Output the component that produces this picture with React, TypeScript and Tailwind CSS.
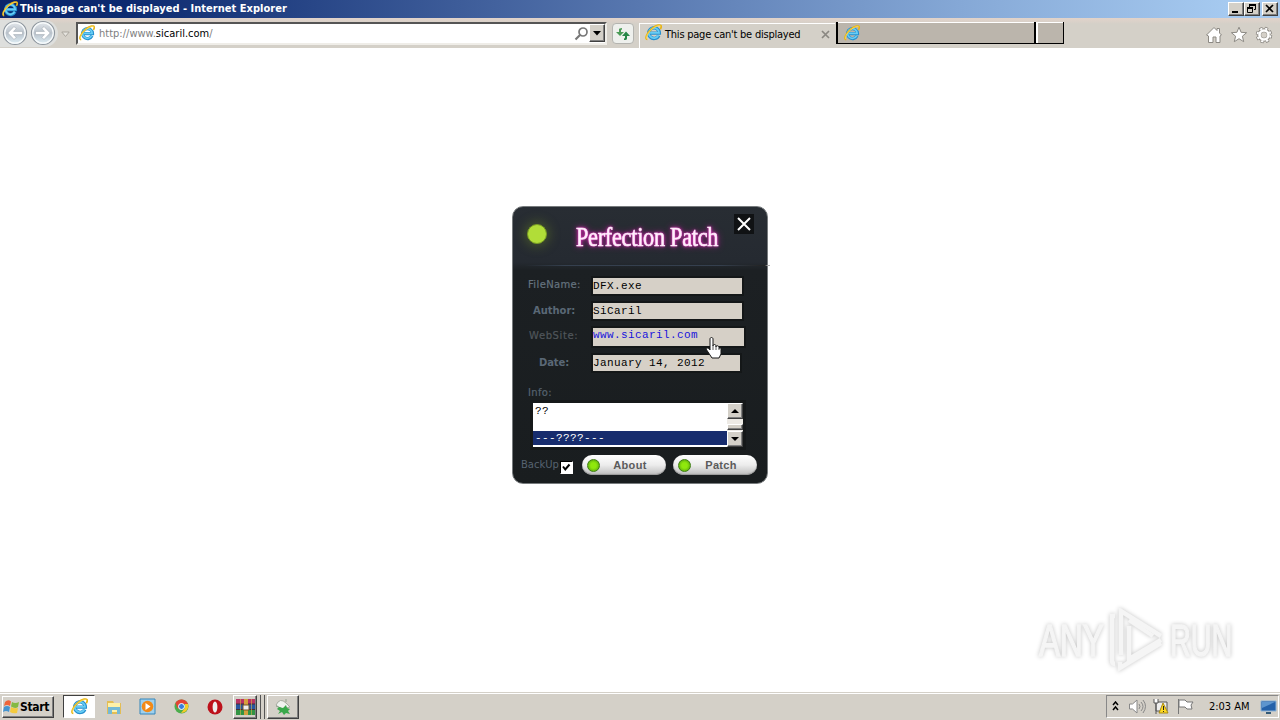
import React from "react";

const tahoma = "font-['DejaVu_Sans_Condensed','DejaVu_Sans',sans-serif]";
const mono = "font-['Liberation_Mono',monospace]";

function IE({ size = 16 }: { size?: number }) {
  return (
    <svg width={size} height={size} viewBox="0 0 16 16" className="shrink-0">
      <path d="M13 10.800A5 5 0 1 1 13.500 8.600H4.500" fill="none" stroke="#258fce" strokeWidth="3.200" />
      <path d="M12.700 10.600A4.800 4.800 0 1 1 13.200 8.400H4.800" fill="none" stroke="#67cdf5" strokeWidth="1.700" />
      <path d="M2.200 14.600C-.6 14.400 1.500 8.700 6.200 4.600 10.600.8 15.200-.1 15.300 2.300c0 .9-.4 1.800-.9 2.600" fill="none" stroke="#e7b416" strokeWidth="1.600" />
      <path d="M2 14C.2 13 3 8 6.600 5 10 2 13.500.8 14.600 1.800" fill="none" stroke="#ffe46b" strokeWidth=".7" />
    </svg>
  );
}

function NavArrow({ flip = false }: { flip?: boolean }) {
  return (
    <svg width="26" height="26" viewBox="0 0 26 26" className={flip ? "-scale-x-100" : ""}>
      <defs>
        <linearGradient id="nav" x1="0" y1="0" x2="0" y2="1">
          <stop offset="0" stopColor="#e6eaee" />
          <stop offset=".5" stopColor="#b9c2cb" />
          <stop offset="1" stopColor="#e1f1f8" />
        </linearGradient>
      </defs>
      <circle cx="13" cy="13" r="11.500" fill="url(#nav)" stroke="#8e969e" strokeWidth="1.200" />
      <circle cx="13" cy="13" r="10.200" fill="none" stroke="#f7fafb" strokeWidth="1.300" />
      <path d="M12 6.500 5.800 13l6.200 6.500 2.200-2.200-2.700-2.700h9v-3.200h-9l2.700-2.700z" fill="#fff" stroke="#a3abb3" strokeWidth=".6" />
    </svg>
  );
}

const raised = "border border-t-white border-l-white border-r-[#404040] border-b-[#404040] bg-[#d4d0c8] shadow-[inset_-1px_-1px_0_#808080]";

function TitleBar() {
  return (
    <div className="flex h-[18px] items-center bg-[linear-gradient(90deg,#0a246a_0%,#0d2a70_10%,#5878b0_50%,#85a8d6_75%,#a6caf0_96%)] pl-[2px] pr-[2px]">
      <IE size={16} />
      <span className={`${tahoma} ml-[2px] w-[280px] whitespace-nowrap pt-px text-[11px] font-bold tracking-[0.020px] text-white`}>This page can't be displayed - Internet Explorer</span>
      <div className="ml-auto flex">
        <button className={`${raised} flex h-[14px] w-4 items-center justify-center`}>
          <svg width="12" height="10"><path d="M2 8h6" stroke="#000" strokeWidth="2" /></svg>
        </button>
        <button className={`${raised} flex h-[14px] w-4 items-center justify-center`}>
          <svg width="12" height="10" fill="none" stroke="#000"><path d="M4 1h5M3.500 1v2M9.500 0v5.500H8M1.500 4v4.500h5V4z" /><path d="M3 1h7M1 4h6" strokeWidth="2" /></svg>
        </button>
        <button className={`${raised} ml-[2px] flex h-[14px] w-4 items-center justify-center`}>
          <svg width="12" height="10"><path d="m2 1 7 7M9 1 2 8" stroke="#000" strokeWidth="1.700" /></svg>
        </button>
      </div>
    </div>
  );
}

function BrowserBar() {
  return (
    <div className="flex h-[30px] bg-[linear-gradient(180deg,#e2d3ca_0,#d4d0c8_6px)]">
      <div className="mt-[2px] flex h-[27px] w-[58px] rounded-r-full bg-[#dedfdd] pl-[2px]">
        <NavArrow />
        <div className="ml-[2px]"><NavArrow flip /></div>
      </div>
      <svg width="10" height="8" className="ml-[3px] mt-[13px]"><path d="M.8 1h7.400L4.500 5.500z" fill="#e6e4df" stroke="#aaa69e" /></svg>
      <div className="ml-[5px] mt-[4px] flex h-[23px] w-[531px] border-2 border-b-[#efede8] border-l-[#555] border-r-[#efede8] border-t-[#555] bg-white">
        <div className="ml-px mt-[1px]"><IE size={16} /></div>
        <span className={`${tahoma} ml-[4px] mt-[2px] whitespace-nowrap text-[11px] leading-4 tracking-[0.010px] text-[#808080]`}>http://www.<span className="text-black">sicaril.com</span>/</span>
        <svg width="16" height="16" className="ml-auto mr-0 mt-[2px]" fill="none" stroke="#777"><circle cx="10" cy="6" r="4" strokeWidth="1.700" /><path d="m7 9-4.500 4.500" strokeWidth="2.200" /></svg>
        <button className={`${raised} flex h-[18px] w-4 items-center justify-center`}><svg width="8" height="5"><path d="M0 0h8L4 4.500z" /></svg></button>
      </div>
      <div className="ml-[5px] mt-[5px] flex h-[21px] w-[22px] items-center justify-center rounded-sm border border-[#b4b4b0] bg-[#eef0ed]">
        <svg width="16" height="16"><path d="M4 6V3.500Q4 2 7 2v1.500Q6 3.500 6 4.500V6h3L5 10 1 6z" fill="#4a9b57" /><path d="M12 10v2.500q0 1.500-3 1.500v-1.500q1 0 1-1V10H7l4-4.500 4 4.500z" fill="#278748" /></svg>
      </div>
      <div className="ml-[5px] mt-[5px] flex h-[25px] w-[196px] border-l border-t border-white pl-[5px] pt-px">
        <div className="-mt-px"><IE size={17} /></div>
        <span className={`${tahoma} ml-[3px] mt-[4px] whitespace-nowrap text-[11px] leading-3 tracking-[-0.230px]`}>This page can't be displayed</span>
        <svg width="9" height="9" className="ml-auto mr-[5px] mt-[5px]"><path d="m1 1 7 7M8 1 1 8" stroke="#8a8781" strokeWidth="1.700" /></svg>
      </div>
      <div className="ml-px mt-[4px] flex h-[22px] w-[200px] border-b border-l-2 border-r-2 border-black bg-[#bbb5ac] pl-[6px] pt-[3px] shadow-[inset_0_1px_0_#fff]"><IE size={16} /></div>
      <div className="mt-[4px] h-[22px] w-[28px] border-b border-r border-black bg-[#bbb5ac] shadow-[inset_2px_1px_0_#fff]" />
      <div className="ml-auto mr-[7px] mt-[8px] flex gap-[7px]">
        <svg width="18" height="18" fill="#fff" stroke="#8c8983"><path d="M1.500 9 9 1.500l3 3v-2h2.500V7l2 2-1.500 1v6.500h-4V11H8v5.500H3.500V10z" /></svg>
        <svg width="18" height="18" fill="#fff" stroke="#8c8983"><path d="m9 1.200 2.100 5.100 5.500.4-4.200 3.500 1.300 5.500L9 12.700l-4.700 3 1.300-5.500L1.400 6.700l5.500-.4z" /></svg>
        <svg width="18" height="18" fill="none"><circle cx="9" cy="9" r="6.500" stroke="#8c8983" strokeWidth="3.500" strokeDasharray="3 2.105" /><circle cx="9" cy="9" r="4.800" stroke="#8c8983" strokeWidth="4" /><circle cx="9" cy="9" r="6.500" stroke="#fff" strokeWidth="1.800" strokeDasharray="2.200 2.905" strokeDashoffset="-.4" /><circle cx="9" cy="9" r="4.500" stroke="#fff" strokeWidth="2.600" /></svg>
      </div>
    </div>
  );
}

const label = "font-['DejaVu_Sans',sans-serif] text-[10px] leading-[14px]";
const field = "border-2 border-[#141718] bg-[#d6d0c7]";
const fieldText = `${mono} whitespace-nowrap text-[11px] tracking-[0.400px]`;

function PillButton({ text }: { text: string }) {
  return (
    <button className="flex h-5 w-[84px] items-center rounded-full bg-[linear-gradient(180deg,#fff_0%,#ececec_50%,#bdbdbd_100%)] pl-[5px] shadow-[inset_0_-1px_1px_#999]">
      <span className="h-[13px] w-[13px] rounded-full border border-[#3d7f11] bg-[radial-gradient(circle,#8fe80c_35%,#5fae0e_80%)]" />
      <span className="flex-1 pb-px pl-[4px] pr-[10px] text-center font-['Liberation_Sans',sans-serif] text-[11px] font-bold leading-4 tracking-[0.300px] text-[#5b5b5b]">{text}</span>
    </button>
  );
}

function PatchWindow() {
  return (
    <section className="relative h-[278px] w-[256px] rounded-[11px] border border-[#777b7d] bg-[linear-gradient(180deg,#282d33_0%,#252a31_20%,#1c2023_23%,#191d1f_100%)] pl-px">
      <header className="flex h-[59px]">
        <span className="ml-[13px] mt-[17px] h-5 w-5 shrink-0 rounded-full border border-[#789b23] bg-[#b1dd38] shadow-[0_0_12px_2px_rgba(135,165,35,0.35)]" />
        <h1 className="ml-[29px] mt-[13px] h-[34px] w-[157px] shrink-0 origin-left scale-x-[0.890] scale-y-[1.080] whitespace-nowrap font-['Liberation_Serif',serif] text-[25px] leading-[34px] tracking-[-0.300px] text-[#fff0fc] [-webkit-text-stroke:0.600px_#ffe5fa] [text-shadow:0_0_2px_#ff45d1,0_0_4px_#e52fbb,0_0_8px_#cd1ba7]">Perfection Patch</h1>
        <button className="ml-px mt-[7px] flex h-5 w-5 shrink-0 items-center justify-center bg-[#101214]"><svg width="16" height="16"><path d="m2 2 12 12M14 2 2 14" stroke="#fff" strokeWidth="2" /></svg></button>
      </header>
      <div className="-mr-[3px] -mt-px h-px bg-[linear-gradient(90deg,transparent_4%,#35404f_20%,#35404f_80%,#222_98%,#aaa_99%)]" />
      <div className="grid grid-cols-[77px_1fr]">
        <span className={`${label} ml-[14px] mt-[12px] tracking-[0.350px] text-[#65737f] [-webkit-text-stroke:0.200px_#65737f]`}>FileName:</span>
        <div className={`${field} mt-[10px] h-5 w-[153px]`}><p className={`${fieldText} leading-[17px]`}>DFX.exe</p></div>
        <span className={`${label} ml-[19px] mt-[8px] -mb-px font-bold tracking-[-0.050px] text-[#5a6876]`}>Author:</span>
        <div className={`${field} mt-[5px] h-5 w-[153px]`}><p className={`${fieldText} leading-[16px]`}>SiCaril</p></div>
        <span className={`${label} ml-[15px] mt-[8px] -mb-px tracking-[0.600px] text-[#50565b] [-webkit-text-stroke:0.200px_#50565b]`}>WebSite:</span>
        <div className={`${field} mt-[5px] h-[22px] w-[155px]`}><p className={`${fieldText} leading-[15px] text-[#1712dc]`}>www.sicaril.com</p></div>
        <span className={`${label} ml-[25px] mt-[8px] -mb-px font-bold tracking-[-0.100px] text-[#5a6876]`}>Date:</span>
        <div className={`${field} mt-[5px] h-5 w-[151px]`}><p className={`${fieldText} leading-[16px]`}>January 14, 2012</p></div>
      </div>
      <div className={`${label} ml-[14px] mt-[13px] h-[14px] tracking-[0.350px] text-[#566370] [-webkit-text-stroke:0.200px_#566370]`}>Info:</div>
      <div className="ml-[19px] mt-[3px] flex h-[44px] w-[210px] bg-white shadow-[0_0_0_3px_#151819]">
        <div className={`${mono} w-[194px] text-[11px] tracking-[0.400px]`}>
          <p className="h-[28px] pl-[2px] leading-[16px]">??</p>
          <p className="h-[14px] bg-[#172c6d] pl-[2px] leading-[15px] text-white">---????---</p>
        </div>
        <div className="flex flex-1 flex-col bg-[#edeae5]">
          <button className={`${raised} flex h-4 items-center justify-center`}><svg width="8" height="4"><path d="m4 0 4 4H0z" /></svg></button>
          <div className={`${raised} mt-[5px] h-[6px]`} />
          <button className={`${raised} mt-auto flex h-4 items-center justify-center`}><svg width="8" height="4"><path d="M0 0h8L4 4z" /></svg></button>
        </div>
      </div>
      <footer className="mt-[8px] flex h-5 items-center pl-[7px]">
        <span className={`${label} w-[39px] text-[#566370]`}>BackUp</span>
        <span className="mt-[4px] h-[13px] w-[13px] border border-b-white border-l-black border-r-white border-t-black bg-white"><svg width="11" height="11"><path d="m2 4.500 2.300 3 4.200-5" fill="none" stroke="#000" strokeWidth="2" /></svg></span>
        <div className="ml-[9px]"><PillButton text="About" /></div>
        <div className="ml-[7px]"><PillButton text="Patch" /></div>
      </footer>
      <svg width="20" height="24" viewBox="0 0 20 24" className="absolute left-[191px] top-[129px]"><path d="M6 14V3c0-2 3-2 3 0v7c0-2 3-2 3 0v1c0-2 3-1.500 3 .5v1c1-1.500 2-.5 2 1V18l-2 4H8l-4-6-2-3c1-2 3-.5 4 1z" fill="#fff" stroke="#171717" /><path d="M9 10v4M12 11v3M15 12v2" stroke="#333" strokeWidth=".8" /></svg>
    </section>
  );
}

function Watermark() {
  return (
    <div className="absolute left-[1039px] top-[607px] flex h-[66px] w-[198px] items-center text-[#f5f5f5] [filter:drop-shadow(0_0_2px_#c4c4c4)]">
      <span className="w-[66px] origin-left scale-x-[0.700] whitespace-nowrap pt-[2px] font-['Liberation_Sans',sans-serif] text-[45px] [-webkit-text-stroke:1.500px_#f5f5f5]">ANY</span>
      <svg width="60" height="64" viewBox="0 0 60 64" fill="none" stroke="#f5f5f5" strokeWidth="4.500">
        <path d="M10 8H7v44q0 4 3 4" />
        <path d="M16 47V3l40 25M24 18v33l32-19" />
        <path d="M24 12 48 28M15 54v6l41-25" />
      </svg>
      <span className="ml-[5px] w-[64px] origin-left scale-x-[0.640] whitespace-nowrap pt-[2px] font-['Liberation_Sans',sans-serif] text-[45px] [-webkit-text-stroke:1.500px_#f5f5f5]">RUN</span>
    </div>
  );
}

function Taskbar() {
  return (
    <footer className="flex h-[28px] items-center border-t border-[#d4d0c8] bg-[#d4d0c8] shadow-[inset_0_1px_0_#fff]">
      <button className={`${raised} ml-[2px] flex h-[22px] w-[52px] items-center`}>
        <svg width="18" height="18" className="shrink-0"><path d="M2 4q3-3 6-.5L7 8Q4 6 1 8z" fill="#ef653a" /><path d="M9 4q3 2 7 0l-1 5q-3 2-7-.5z" fill="#84b943" /><path d="M1 9q3-2 6 0l-1 5q-3-2-6 0z" fill="#4594d0" /><path d="M8 9q3 2 7 1l-1 5q-4 1-7-1z" fill="#f4ca3e" /></svg>
        <span className={`${tahoma} -ml-px text-[12px] font-bold tracking-[-0.300px]`}>Start</span>
      </button>
      <div className="ml-[9px] flex h-[23px] w-[32px] items-center justify-center border border-b-white border-l-[#404040] border-r-white border-t-[#404040] bg-white"><IE size={17} /></div>
      <svg className="ml-[10px]" width="18" height="18"><path d="M2 3h6l1 2h7v11H2z" fill="#e3bd55" /><path d="M3 5h12v9H3z" fill="#fff1a7" /><path d="M3 9h12v7h-3v-4H7v4H3z" fill="#75b9d5" /></svg>
      <svg className="ml-[16px]" width="17" height="17"><path d="M1 1h15v15H1z" fill="#9fd0ed" stroke="#3486bb" /><circle cx="8.500" cy="8.500" r="5.800" fill="#f28a18" /><path d="m6.500 5 5 3.500-5 3.500z" fill="#fff" /></svg>
      <svg className="ml-[18px]" width="15" height="15"><circle cx="7.500" cy="7.500" r="7" fill="#4cad4c" /><path d="M1.400 4A7 7 0 0 1 14 5H8l-4 5z" fill="#e34335" /><path d="M14 5a7 7 0 0 1-7 9l4-5V5z" fill="#f6cb28" /><circle cx="7.500" cy="7.500" r="3" fill="#387edb" stroke="#fff" /></svg>
      <svg className="ml-[18px]" width="16" height="16"><ellipse cx="8" cy="8" rx="7.500" ry="7.500" fill="#bd111b" /><ellipse cx="8" cy="8" rx="2.400" ry="5.500" fill="#eee" /></svg>
      <div className={`${raised} ml-[10px] flex h-[24px] w-[24px] items-center justify-center`}>
        <svg width="19" height="18"><path d="M0 1h19v5H0z" fill="#b93263" /><path d="M0 6h19v6H0z" fill="#2855a0" /><path d="M0 12h19v5H0z" fill="#329343" /><path d="M0 6h19M0 11.500h19" stroke="#492c32" /><path d="M8 1h4v16H8z" fill="#d6a03c" /><path d="M7 7h6v5H7z" fill="#eee" stroke="#765626" /><path d="M4.500 1v16M15.500 1v16" stroke="#d5b64a" strokeOpacity=".6" /></svg>
      </div>
      <div className="h-[24px] w-[4px] border-r border-[#555]" /><div className="h-[24px] w-[4px] border-r border-[#555]" />
      <div className={`${raised} ml-[2px] flex h-[24px] w-[32px] items-center justify-center`}><svg width="20" height="20"><path d="M3 8q4-8 10-2l4 4-9 2z" fill="#f0f2ee" stroke="#a6aca0" /><path d="M13 2v3M3 9l5 2" stroke="#91a38d" /><path d="m6 10 4 1 3-3 1 3 3 1-2 2 2 3-4-1-2 2-2-3-4 2 2-3-3-2z" fill="#39a84a" /></svg></div>
      <div className="ml-auto mr-px flex h-[23px] w-[173px] items-center border border-b-white border-l-[#888] border-r-white border-t-[#888]">
        <svg className="ml-[5px] shrink-0" width="7" height="12" fill="none" stroke="#000" strokeWidth="1.500"><path d="m1 4 2.500-3L6 4M1 9l2.500-3L6 9" /></svg>
        <svg className="ml-[9px] shrink-0" width="18" height="17" fill="none" stroke="#888"><path d="M1.500 6h3L9 2v13l-4.500-4h-3z" fill="#fff" /><path d="M11 6q2 2.500 0 5M13 4q4 4.500 0 9M15 2q5 6 0 13" /></svg>
        <svg className="ml-[6px] shrink-0" width="18" height="17"><path d="M4 4h11v9H4z" fill="#eee" stroke="#555" /><path d="M2 1v4h4V1M4 5v11" fill="#fff" stroke="#555" /><path d="m11 5 5 10H7z" fill="#ffda22" stroke="#aa8a10" /><path d="M11.500 8v4M11.500 13v1" stroke="#222" /></svg>
        <svg className="ml-[6px] shrink-0" width="18" height="17" fill="#fff" stroke="#777"><path d="M2.500 1v15M3 2h6l2 2h6l-2 3 1 4h-5l-2-2H3z" /></svg>
        <span className={`${tahoma} ml-[15px] whitespace-nowrap pt-[2px] text-[11px] tracking-[-0.020px]`}>2:03 AM</span>
        <svg className="ml-auto mr-px shrink-0" width="17" height="16"><path d="M1 2h15v10H1z" fill="#2461a9" stroke="#8cb2d5" /><path d="M2 3h13L2 9z" fill="#5d95ce" /><path d="M6 13h5v2H6z" fill="#345a77" /></svg>
      </div>
    </footer>
  );
}

export default function App() {
  return (
    <div className="relative flex h-[720px] w-[1280px] flex-col overflow-hidden bg-white text-black">
      <TitleBar />
      <BrowserBar />
      <main className="flex flex-1 items-start justify-center pt-[158px]"><PatchWindow /></main>
      <Watermark />
      <Taskbar />
    </div>
  );
}
